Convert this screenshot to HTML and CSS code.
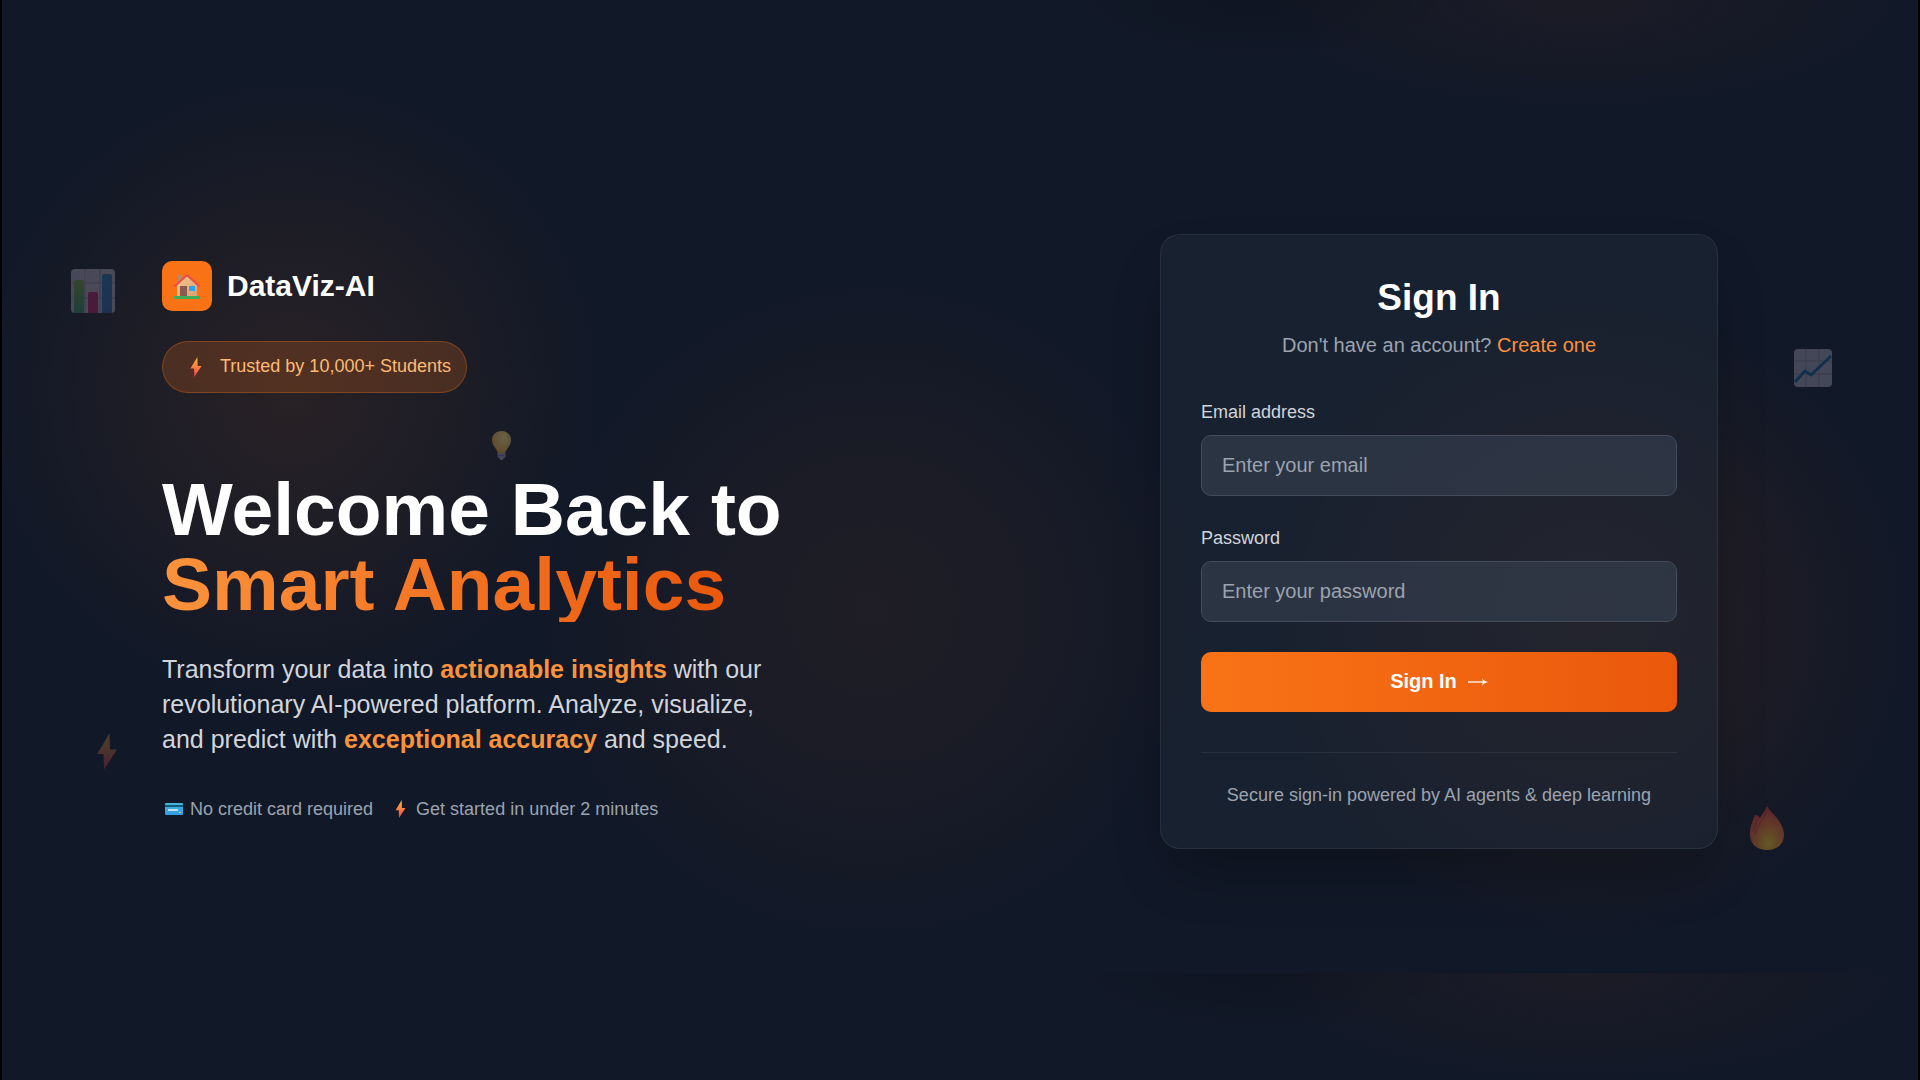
FILE: index.html
```html
<!DOCTYPE html>
<html lang="en">
<head>
<meta charset="utf-8">
<title>DataViz-AI | Sign In</title>
<meta name="viewport" content="width=device-width, initial-scale=1">
<link rel="stylesheet" href="styles.css">
</head>
<body>
<svg class="defs" aria-hidden="true">
  <defs>
    <linearGradient id="bolt-fill" x1="0" y1="0" x2="0" y2="1"><stop offset="0" stop-color="#fcb53b"/><stop offset=".5" stop-color="#fb7f3f"/><stop offset="1" stop-color="#f0385f"/></linearGradient>
    <linearGradient id="card-fill" x1="0" y1="0" x2="0" y2="1"><stop offset="0" stop-color="#3fb8d8"/><stop offset="1" stop-color="#2f9be8"/></linearGradient>
    <linearGradient id="green-bar" x1="0" y1="0" x2="0" y2="1"><stop offset="0" stop-color="#8fc63f"/><stop offset="1" stop-color="#2fae6b"/></linearGradient>
    <linearGradient id="blue-bar" x1="0" y1="0" x2="0" y2="1"><stop offset="0" stop-color="#2089d8"/><stop offset="1" stop-color="#2f6fd0"/></linearGradient>
    <linearGradient id="wall-fill" x1="0" y1="0" x2="1" y2="1"><stop offset="0" stop-color="#f7c98b"/><stop offset="1" stop-color="#d8a070"/></linearGradient>
    <radialGradient id="flame-fill" cx=".55" cy=".85" r=".75"><stop offset="0" stop-color="#f5d020"/><stop offset=".45" stop-color="#f58a2c"/><stop offset="1" stop-color="#e8413c"/></radialGradient>
    <radialGradient id="bulb-fill" cx=".6" cy=".3" r=".7"><stop offset="0" stop-color="#ffe48a"/><stop offset="1" stop-color="#e0a52c"/></radialGradient>
    <symbol id="bolt" viewBox="0 0 20 36"><path d="M12.500 0 0 20.500h6.500L7 36 20 16h-7z" fill="url(#bolt-fill)"/></symbol>
  </defs>
</svg>

<main class="page">
  <div class="glow glow-left"></div>
  <div class="glow glow-center"></div>
  <div class="glow glow-right"></div>
  <div class="band band-top"></div>
  <div class="band band-bottom"></div>

  <svg class="float float-bars" viewBox="0 0 44 44" aria-hidden="true">
    <rect width="44" height="44" rx="4" fill="#d9d2e9"/>
    <path d="M14 0v44M29 0v44M0 14h44M0 29h44" stroke="#a9a2bd" stroke-width="1"/>
    <path d="M3 44V13q0-2 2-2h6q2 0 2 2v31z" fill="url(#green-bar)"/>
    <path d="M17 44V25q0-2 2-2h6q2 0 2 2v19z" fill="#d41d73"/>
    <path d="M31 44V7q0-2 2-2h6q2 0 2 2v37z" fill="url(#blue-bar)"/>
  </svg>
  <svg class="float float-trend" viewBox="0 0 38 38" aria-hidden="true">
    <rect width="38" height="38" rx="4" fill="#d9d2e9"/>
    <path d="M12 0v38M25 0v38M0 12h38M0 25h38" stroke="#a9a2bd" stroke-width="1"/>
    <path d="M1 33 11 22l6 4L37 7" fill="none" stroke="#1276c0" stroke-width="3" stroke-linejoin="round"/>
  </svg>
  <svg class="float float-bulb" viewBox="0 0 19 29" aria-hidden="true">
    <path d="M9.500 0C4 0 0 4 0 9.300c0 3.200 1.500 5.300 3 7.400 1.500 2 2.500 3.300 2.800 5.300h7.400c.3-2 1.300-3.300 2.800-5.300 1.500-2.100 3-4.200 3-7.400C19 4 15 0 9.500 0z" fill="url(#bulb-fill)"/>
    <path d="M5.500 22h8v4l-2 1.500-1 1.500h-2l-1-1.500-2-1.500z" fill="#9b93b5"/>
    <path d="M5.500 24.500h8" stroke="#6f6888"/>
  </svg>
  <svg class="float float-bolt" aria-hidden="true"><use href="#bolt"/></svg>
  <svg class="float float-flame" viewBox="0 0 34 44" aria-hidden="true">
    <path d="M17 0c2 6 15 13 17 27 1 10-6 17-17 17S-1 37 0 26C.6 19 3 14 5 9c2 0 4 1 5 3 2-4 5-7 7-12z" fill="url(#flame-fill)"/>
    <path d="M17 1C17 12 7 16 5 29M8 10C8 16 4 19 3 26" fill="none" stroke="#c92d3a" stroke-width="2" opacity=".5"/>
  </svg>

  <section class="intro">
    <div class="brand">
      <span class="brand-tile">
        <svg class="house" viewBox="0 0 26 26" aria-hidden="true">
          <path d="M4 2h4v8H4z" fill="#b98a6a"/>
          <path d="M3 12 13 3l10 9v12H3z" fill="url(#wall-fill)"/>
          <path d="M6 13h7v11H6z" fill="#8a5a50"/>
          <path d="M15 13h6v5h-6z" fill="#2aa4f4"/>
          <path d="M1 13 13 2l12 11" fill="none" stroke="#ee4b4b" stroke-width="2" stroke-linecap="round" stroke-linejoin="round"/>
          <path d="M0 23h26v3H0z" fill="#3fae5a"/>
        </svg>
      </span>
      <span class="brand-name">DataViz-AI</span>
    </div>
    <div class="badge">
      <svg class="badge-bolt" aria-hidden="true"><use href="#bolt"/></svg>
      <span>Trusted by 10,000+ Students</span>
    </div>
    <h1 class="headline">Welcome Back to <span class="accent">Smart Analytics</span></h1>
    <p class="lead">Transform your data into <strong>actionable insights</strong> with our revolutionary AI-powered platform. Analyze, visualize, and predict with <strong>exceptional accuracy</strong> and speed.</p>
    <ul class="perks">
      <li>
        <span class="perk-icon">
          <svg class="perk-card" viewBox="0 0 18 12" aria-hidden="true">
            <rect width="18" height="12" rx="1" fill="url(#card-fill)"/>
            <path d="M0 2h18v2H0z" fill="#155a78"/>
            <path d="M3 6h10v2H3z" fill="#c8dbe8"/>
            <path d="M14 9h2v1h-2z" fill="#f5c542"/>
          </svg>
        </span>
        No credit card required
      </li>
      <li>
        <span class="perk-icon">
          <svg class="perk-bolt" aria-hidden="true"><use href="#bolt"/></svg>
        </span>
        Get started in under 2 minutes
      </li>
    </ul>
  </section>

  <section class="panel">
    <form class="card">
      <h2 class="title">Sign In</h2>
      <p class="subtitle">Don't have an account? <a href="#">Create one</a></p>
      <div class="field">
        <label for="email">Email address</label>
        <input id="email" type="email" placeholder="Enter your email">
      </div>
      <div class="field">
        <label for="password">Password</label>
        <input id="password" type="password" placeholder="Enter your password">
      </div>
      <button class="submit" type="submit">Sign In
        <svg class="arrow" viewBox="0 0 20 10" aria-hidden="true"><path d="M0 5h18" stroke="#fff" stroke-width="1.300"/><path d="M14 1q1.500 3 6 4-4.500 1-6 4l1-4z" fill="#fff"/></svg>
      </button>
      <p class="note">Secure sign-in powered by AI agents &amp; deep learning</p>
    </form>
  </section>
</main>
</body>
</html>
```
FILE: styles.css
```css
* {
  box-sizing: border-box;
}

body {
  margin: 0;
  background: #111827;
  color: #fff;
  font-family: "Liberation Sans", Arial, sans-serif;
}

h1, h2, p, ul {
  margin: 0;
  padding: 0;
}

.defs {
  position: absolute;
  width: 0;
  height: 0;
}

.page {
  position: relative;
  display: grid;
  grid-template-columns: 1fr 1fr;
  align-items: center;
  min-height: 100vh;
  padding: 2px 160px 0;
  border: solid #000;
  border-width: 0 2px;
  overflow: hidden;
}

/* Ambient light behind the content */
.glow {
  position: absolute;
  border-radius: 50%;
}

.glow-left {
  left: -20px;
  top: 80px;
  width: 620px;
  height: 620px;
  background: radial-gradient(closest-side, rgba(249, 115, 22, .1), rgba(249, 115, 22, .06) 45%, transparent);
}

.glow-center {
  left: 540px;
  top: 280px;
  width: 660px;
  height: 660px;
  background: radial-gradient(closest-side, rgba(249, 115, 22, .06), rgba(249, 115, 22, .04) 50%, transparent);
}

.glow-right {
  right: 10px;
  top: 300px;
  width: 640px;
  height: 640px;
  background: radial-gradient(closest-side, rgba(234, 88, 12, .1), rgba(234, 88, 12, .06) 50%, transparent);
}

.band {
  position: absolute;
  left: 55%;
  right: 0;
  height: 107px;
  background:
    radial-gradient(ellipse 320px 107px at 61% 0, rgba(234, 88, 12, .05), transparent),
    radial-gradient(ellipse 200px 60px at 24% 0, rgba(0, 0, 0, .15), transparent);
}

.band-top {
  top: 0;
}

.band-bottom {
  bottom: 0;
}

/* Floating decorations */
.float {
  position: absolute;
  opacity: .25;
}

.float-bars {
  left: 69px;
  top: 269px;
  width: 44px;
  height: 44px;
}

.float-trend {
  right: 86px;
  top: 349px;
  width: 38px;
  height: 38px;
}

.float-bulb {
  left: 490px;
  top: 431px;
  width: 19px;
  height: 29px;
  opacity: .35;
}

.float-bolt {
  left: 95px;
  top: 733px;
  width: 20px;
  height: 37px;
}

.float-flame {
  right: 134px;
  top: 806px;
  width: 34px;
  height: 44px;
  opacity: .35;
}

/* Introduction */
.intro {
  position: relative;
  max-width: 640px;
}

.brand {
  display: flex;
  align-items: center;
  gap: 15px;
  margin-bottom: 30px;
}

.brand-tile {
  display: grid;
  place-items: center;
  width: 50px;
  height: 50px;
  border-radius: 10px;
  background: #f97316;
}

.house {
  width: 26px;
  height: 26px;
}

.brand-name {
  font-size: 30px;
  font-weight: 700;
}

.badge {
  display: flex;
  align-items: center;
  gap: 18px;
  width: fit-content;
  height: 52px;
  margin-bottom: 79px;
  padding: 0 15px 0 27px;
  border: 1px solid rgba(249, 115, 22, .3);
  border-radius: 26px;
  background: rgba(249, 115, 22, .2);
  color: #fdba74;
  font-size: 18px;
}

.badge-bolt {
  width: 12px;
  height: 20px;
}

.headline {
  font-size: 75px;
  line-height: 75px;
}

.accent {
  display: block;
  width: fit-content;
  background: linear-gradient(90deg, #fb923c, #ea580c);
  background-clip: text;
  -webkit-background-clip: text;
  color: transparent;
}

.lead {
  margin-top: 30px;
  color: #d1d5db;
  font-size: 25px;
  line-height: 35px;
}

.lead strong {
  color: #fb923c;
}

.perks {
  display: flex;
  gap: 15px;
  margin-top: 40px;
  color: #9ca3af;
  font-size: 18px;
  line-height: 25px;
  list-style: none;
}

.perks li {
  display: flex;
  align-items: center;
  gap: 4px;
}

.perk-icon {
  display: grid;
  place-items: center;
  width: 24px;
  height: 24px;
}

.perk-card {
  width: 18px;
  height: 12px;
}

.perk-bolt {
  width: 11px;
  height: 18px;
}

/* Sign-in card */
.panel {
  position: relative;
  display: flex;
  justify-content: flex-end;
  padding-right: 40px;
}

.card {
  width: 558px;
  padding: 40px;
  border: 1px solid rgba(75, 85, 99, .3);
  border-radius: 20px;
  background: rgba(31, 41, 55, .5);
  box-shadow: 0 30px 60px -15px rgba(0, 0, 0, .3);
}

.title {
  font-size: 37px;
  line-height: 45px;
  text-align: center;
}

.subtitle {
  margin: 10px 0 40px;
  color: #9ca3af;
  font-size: 20px;
  line-height: 30px;
  text-align: center;
}

.subtitle a {
  color: #fb923c;
  text-decoration: none;
}

.field {
  display: flex;
  flex-direction: column;
  gap: 10px;
  margin-bottom: 30px;
}

.field label {
  color: #d1d5db;
  font-size: 18px;
  line-height: 25px;
}

.field input {
  height: 61px;
  padding: 0 20px;
  border: 1px solid #434c5b;
  border-radius: 10px;
  background: rgba(55, 65, 81, .6);
  color: #fff;
  font: inherit;
  font-size: 20px;
}

.field input::placeholder {
  color: #9ca3af;
}

.submit {
  display: flex;
  align-items: center;
  justify-content: center;
  gap: 11px;
  width: 100%;
  height: 60px;
  border: 0;
  border-radius: 10px;
  background: linear-gradient(90deg, #f97316, #ea580c);
  color: #fff;
  font: inherit;
  font-size: 20px;
  font-weight: 700;
}

.arrow {
  width: 20px;
  height: 10px;
}

.note {
  margin-top: 40px;
  padding-top: 30px;
  border-top: 1px solid rgba(75, 85, 99, .3);
  color: #9ca3af;
  font-size: 18px;
  line-height: 25px;
  text-align: center;
}
```
